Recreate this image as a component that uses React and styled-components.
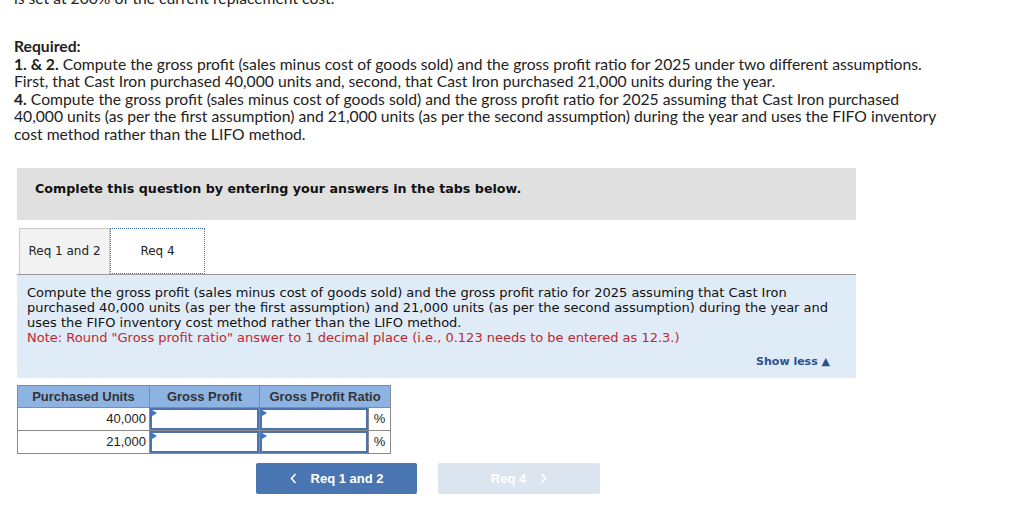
import React from "react";
import styled, { createGlobalStyle } from "styled-components";

const Global = createGlobalStyle`
  html, body { margin: 0; padding: 0; background: #fff; }
  body { width: 1024px; height: 509px; overflow: hidden; }
`;

const Page = styled.div`
  position: relative;
  padding: 0 14px;
  font-family: Lato, "Open Sans", sans-serif;
  color: #222;
`;

const TopBar = styled.div`
  position: absolute;
  top: 0;
  right: 0;
  width: 91px;
  height: 3px;
  background: #4a72ad;
  border-radius: 0 0 0 2px;
`;

const CutLine = styled.div`
  font-size: 15.7px;
  line-height: 18px;
  margin-top: -11px;
  white-space: nowrap;
`;

const Required = styled.div`
  margin-top: 31px;
  font-size: 15.7px;
  line-height: 17.6px;
  white-space: nowrap;
`;

const Card = styled.div`
  margin: 24px 0 0 3px;
  width: 839px;
  font-family: "DejaVu Sans", Verdana, sans-serif;
`;

const Banner = styled.div`
  background: #e0e0e0;
  height: 52px;
  box-sizing: border-box;
  padding: 12px 0 0 18px;
  font-size: 12.7px;
  line-height: 18px;
  font-weight: bold;
  color: #111;
`;

const TabRow = styled.div`
  display: flex;
  margin-top: 8px;
  padding-left: 2px;
  border-bottom: 1px solid #9a9a9a;
`;

const Tab = styled.div`
  height: 46px;
  box-sizing: border-box;
  display: flex;
  align-items: center;
  justify-content: center;
  font-size: 12px;
  color: #222;
  width: ${(p) => p.$w}px;
  background: ${(p) => (p.$active ? "#fff" : "#f2f2f2")};
  border: 1px ${(p) => (p.$active ? "dotted #3f6fc0" : "solid #c9c9c9")};
  border-bottom: ${(p) => (p.$active ? "1px dotted #3f6fc0" : "none")};
  margin-bottom: ${(p) => (p.$active ? "-1px" : "0")};
  position: relative;
`;

const Panel = styled.div`
  background: #dfebf7;
  height: 103px;
  box-sizing: border-box;
  padding: 10px 10px 0 10px;
  position: relative;
  font-size: 13px;
  line-height: 15px;
  color: #111;
`;

const Note = styled.div`
  color: #c0282d;
`;

const ShowLess = styled.div`
  position: absolute;
  right: 26px;
  bottom: 9px;
  font-size: 11px;
  font-weight: bold;
  color: #2d5190;
`;

const Table = styled.table`
  margin-top: 7px;
  border-collapse: collapse;
  font-family: "Liberation Sans", Arial, sans-serif;
  font-size: 13px;
  color: #222;
`;

const Th = styled.th`
  background: #8db3e2;
  border: 1px solid #8a8a8a;
  height: 21px;
  padding: 0;
  font-weight: bold;
  color: #333;
  width: ${(p) => p.$w}px;
`;

const Td = styled.td`
  border: 1px solid #8a8a8a;
  height: 21px;
  padding: 0 3px 0 0;
  text-align: right;
  background: #fff;
`;

const InputTd = styled.td`
  border: 1px solid #8a8a8a;
  height: 21px;
  padding: 0;
`;

const InputBox = styled.div`
  position: relative;
  height: 22px;
  box-sizing: border-box;
  border: 2px solid #4c73ad;
  background: #fff;
  &::before {
    content: "";
    position: absolute;
    left: 0;
    top: 0;
    border-left: 5px solid #3d77c4;
    border-top: 3px solid transparent;
    border-bottom: 3px solid transparent;
  }
`;

const PctTd = styled.td`
  border: 1px solid #8a8a8a;
  width: 21px;
  padding: 0;
  text-align: center;
  font-size: 13px;
`;

const Nav = styled.div`
  display: flex;
  gap: 21px;
  margin: 9px 0 0 239px;
`;

const NavButton = styled.div`
  width: ${(p) => p.$w}px;
  height: 31px;
  border-radius: 2px;
  background: ${(p) => (p.$disabled ? "#dbe4ef" : "#4a75b3")};
  color: #fff;
  font-family: "Liberation Sans", Arial, sans-serif;
  font-weight: bold;
  font-size: 13px;
  display: flex;
  align-items: center;
  justify-content: center;
  gap: 14px;
`;

const Chevron = ({ dir }) => (
  <svg width="7" height="11" viewBox="0 0 7 11">
    <path
      d={dir === "left" ? "M5.5 1 L1.5 5.5 L5.5 10" : "M1.5 1 L5.5 5.5 L1.5 10"}
      fill="none"
      stroke="#fff"
      strokeWidth="1.6"
    />
  </svg>
);

export default function App() {
  return (
    <>
      <Global />
      <Page>
        <TopBar />
        <CutLine>is set at 200% of the current replacement cost.</CutLine>
        <Required>
          <b>Required:</b>
          <br />
          <b>1. &amp; 2.</b> Compute the gross profit (sales minus cost of goods sold) and the gross profit ratio for 2025 under two different assumptions.
          <br />
          First, that Cast Iron purchased 40,000 units and, second, that Cast Iron purchased 21,000 units during the year.
          <br />
          <b>4.</b> Compute the gross profit (sales minus cost of goods sold) and the gross profit ratio for 2025 assuming that Cast Iron purchased
          <br />
          40,000 units (as per the first assumption) and 21,000 units (as per the second assumption) during the year and uses the FIFO inventory
          <br />
          cost method rather than the LIFO method.
        </Required>
        <Card>
          <Banner>Complete this question by entering your answers in the tabs below.</Banner>
          <TabRow>
            <Tab $w={91}>Req 1 and 2</Tab>
            <Tab $w={95} $active>Req 4</Tab>
          </TabRow>
          <Panel>
            Compute the gross profit (sales minus cost of goods sold) and the gross profit ratio for 2025 assuming that Cast Iron
            <br />
            purchased 40,000 units (as per the first assumption) and 21,000 units (as per the second assumption) during the year and
            <br />
            uses the FIFO inventory cost method rather than the LIFO method.
            <Note>Note: Round "Gross profit ratio" answer to 1 decimal place (i.e., 0.123 needs to be entered as 12.3.)</Note>
            <ShowLess>Show less ▲</ShowLess>
          </Panel>
          <Table>
            <thead>
              <tr>
                <Th $w={131}>Purchased Units</Th>
                <Th $w={109}>Gross Profit</Th>
                <Th $w={130} colSpan={2}>Gross Profit Ratio</Th>
              </tr>
            </thead>
            <tbody>
              {["40,000", "21,000"].map((v) => (
                <tr key={v}>
                  <Td>{v}</Td>
                  <InputTd>
                    <InputBox />
                  </InputTd>
                  <InputTd>
                    <InputBox />
                  </InputTd>
                  <PctTd>%</PctTd>
                </tr>
              ))}
            </tbody>
          </Table>
          <Nav>
            <NavButton $w={161}>
              <Chevron dir="left" />
              Req 1 and 2
            </NavButton>
            <NavButton $w={162} $disabled>
              Req 4
              <Chevron dir="right" />
            </NavButton>
          </Nav>
        </Card>
      </Page>
    </>
  );
}
